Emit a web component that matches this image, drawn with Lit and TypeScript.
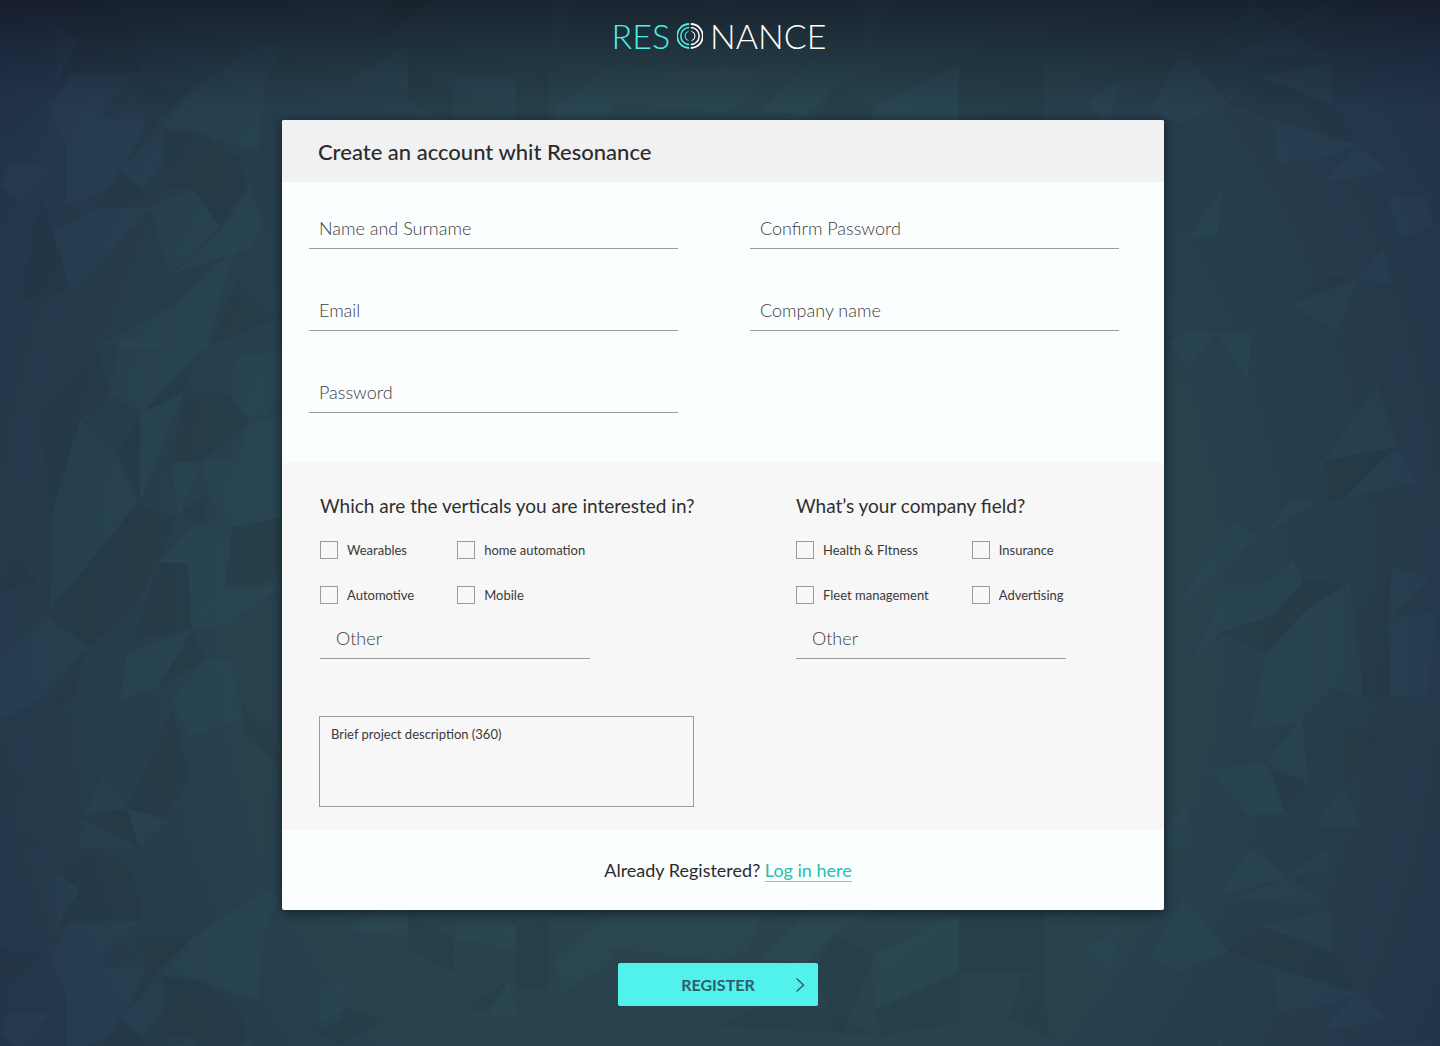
import { LitElement, html, svg, css } from "lit";
import { customElement, property } from "lit/decorators.js";

const LIGHT_FACETS = [
  "57,24 79,42 57,80", "72,73 138,73 115,95 66,147 50,110", "66,147 92,118 146,120 140,140 106,190 66,205",
  "160,127 195,88 262,45 285,40 265,80 258,150 240,147 196,131", "53,232 100,208 149,208 72,292",
  "163,130 165,155 143,190 120,170", "10,163 50,167 20,200 0,187", "347,82 405,47 408,88",
  "150,207 193,190 220,227 170,273", "250,187 263,225 250,248 175,272 222,228", "100,345 180,302 235,250 205,350",
  "80,420 115,453 138,502 50,612 51,517", "140,413 183,393 140,502",
  "250,420 282,418 282,517 232,527 208,493 203,460 238,460", "193,527 232,527 225,587 192,630 188,563 158,563",
  "192,630 158,687 120,700 127,653", "205,660 232,660 240,720 190,735 172,700", "127,808 167,821 140,846",
  "83,819 138,848 80,848", "0,660 47,615 85,648 40,700 0,720", "172,463 203,463 178,515", "225,587 282,587 227,624 192,630",
  "230,393 235,358 282,352 282,400 250,420", "120,340 200,350 141,413 110,393", "85,815 103,776 127,808",
  "1357,145 1388,172 1322,183", "1273,120 1357,145 1330,157 1277,163", "1260,77 1330,63 1332,103",
  "1183,50 1227,103 1180,123 1150,110", "1220,47 1288,30 1250,0", "1288,28 1327,0 1330,22",
  "1233,52 1288,30 1327,57", "1388,197 1428,197 1432,227 1400,238", "1223,187 1217,237 1190,237",
  "1293,305 1357,280 1337,332", "1383,248 1393,285 1360,277", "1217,333 1252,333 1247,378",
  "1182,333 1217,333 1187,365 1167,343", "1377,385 1397,447 1325,460", "1397,447 1415,483 1345,498",
  "1318,500 1260,537 1293,500", "1293,560 1303,580 1273,615 1218,633 1187,670 1227,587 1267,583",
  "1173,613 1233,523 1257,537", "1350,583 1363,700 1333,687 1297,723 1250,730 1267,653 1308,608",
  "1393,567 1430,578 1387,618", "1387,618 1437,613 1427,697 1392,697", "1302,717 1308,783 1267,762",
  "1210,768 1267,763 1285,813 1248,815", "1343,788 1362,828 1315,825", "1187,803 1192,848 1167,848 1167,825",
  "457,78 516,78 516,101 457,91", "557,108 611,65 611,115 560,145", "718,65 763,65 746,101",
  "763,111 807,63 875,63 835,85 807,115", "872,108 959,65 959,125 875,161", "510,131 516,168 485,168",
  "1088,101 1122,78 1108,125", "555,0 575,0 557,60 549,40", "860,0 895,0 862,62", "611,65 718,65 746,101 720,112 611,100",
  "320,140 345,131 342,170 320,185",
];

const DARK_FACETS = [
  "95,0 130,22 143,60 138,73 72,73 57,80 79,42 57,24", "120,172 149,197 127,208 97,208", "40,197 53,230 70,290 20,303",
  "160,130 197,132 240,157 247,187 220,227 193,190 167,187", "196,88 160,120 120,170 146,120 140,90",
  "237,280 277,320 210,345", "97,350 110,393 80,420 51,517 39,413", "138,502 177,518 157,563 133,613 87,647 47,612",
  "183,393 230,393 250,422 203,460 172,463", "232,527 282,517 282,567 260,587 225,587",
  "188,563 192,630 133,640 157,563", "192,630 205,660 158,687", "85,650 73,700 43,715", "13,553 38,583 0,590",
  "172,708 190,776 165,819 127,808", "127,808 138,846 83,819", "13,764 28,786 0,786", "193,370 183,393 141,413",
  "240,700 272,732 282,770 245,735", "27,835 42,848 10,848", "178,515 208,493 205,525", "0,100 48,108 0,143",
  "118,453 140,413 140,502", "1227,103 1260,77 1337,107 1357,145 1273,120", "1293,302 1330,275 1358,278",
  "1325,460 1397,447 1345,498 1328,500", "1358,617 1390,573 1390,697 1363,697", "1343,730 1390,730 1343,788",
  "1303,580 1350,583 1308,608 1267,653 1218,633 1273,615", "1271,770 1308,783 1285,813",
  "409,65 454,91 454,125 409,101", "516,78 549,71 549,141 516,141", "835,85 875,108 841,188 813,125",
  "959,65 1043,65 1043,125 959,125", "718,178 768,155 813,158 880,188", "875,161 959,121 959,175 880,188",
  "490,165 510,131 465,160", "390,0 430,0 372,45", "310,180 345,160 385,172 340,198", "1020,130 1043,125 1050,190 1010,170",
];

@customElement("faceted-backdrop")
export class FacetedBackdrop extends LitElement {
  static styles = css`
    :host { display: block; overflow: hidden; }
    .art { display: block; width: 100%; height: 100%; }
    .light { fill: #3f7484; fill-opacity: 0.07; }
    .dark { fill: #151d22; fill-opacity: 0.09; }
  `;

  render() {
    return html`
      <svg class="art" aria-hidden="true">
        <defs>
          <pattern id="facets" width="1440" height="848" patternUnits="userSpaceOnUse">
            ${DARK_FACETS.map((p) => svg`<polygon class="dark" points=${p} />`)}
            ${LIGHT_FACETS.map((p) => svg`<polygon class="light" points=${p} />`)}
          </pattern>
        </defs>
        <rect width="100%" height="100%" fill="url(#facets)" />
      </svg>
    `;
  }
}

@customElement("brand-logo")
export class BrandLogo extends LitElement {
  static styles = css`
    :host { display: block; }
    .logo { display: flex; align-items: center; gap: 7px; color: #fff; text-decoration: none;
      font: 300 34px/40px Lato, "Liberation Sans", sans-serif; }
    .accent { color: #4ff0ea; }
    .mark { display: block; width: 26px; height: 26px; fill: none; stroke-linecap: butt; }
  `;

  render() {
    return html`
      <a class="logo" href="#" aria-label="Resonance">
        <span class="accent">RES</span>
        <svg class="mark" viewBox="0 0 26 26" aria-hidden="true">
          <g stroke="#4ff0ea">
            <path stroke-width="1.8" d="M12.2 1A12 12 0 0 0 12.2 25" />
            <path stroke-width="1.5" d="M12.2 4.6A8.4 8.4 0 0 0 12.2 21.4" />
            <path stroke-width="1" d="M11.6 8.2A5 5 0 0 0 11.6 17.8" />
          </g>
          <g stroke="#fff">
            <path stroke-width="1.8" d="M13.8 1A12 12 0 0 1 13.8 25" />
            <path stroke-width="1.5" d="M13.8 4.6A8.4 8.4 0 0 1 13.8 21.4" />
            <path stroke-width="1" d="M14.4 8.2A5 5 0 0 1 14.4 17.8" />
          </g>
        </svg>
        <span>NANCE</span>
      </a>
    `;
  }
}

@customElement("line-field")
export class LineField extends LitElement {
  @property() label = "";
  @property() type = "text";
  @property({ type: Boolean, reflect: true }) inset = false;

  static styles = css`
    :host { display: block; }
    .input { box-sizing: border-box; display: block; width: 100%; height: 42px; margin: 0; padding: 0 10px;
      border: 0; border-bottom: 1px solid #999c9d; border-radius: 0; outline: 0; background: none; color: #333;
      font: 300 18px/24px Lato, "Liberation Sans", sans-serif; }
    .input::placeholder { color: #404040; opacity: 1; }
    .input:focus { border-color: #2cbcb0; }
    :host([inset]) .input { padding-left: 16px; }
  `;

  render() {
    return html`<input class="input" type=${this.type} placeholder=${this.label} aria-label=${this.label} />`;
  }
}

@customElement("option-group")
export class OptionGroup extends LitElement {
  @property() heading = "";
  @property({ attribute: false }) options: string[] = [];

  static styles = css`
    :host { display: block; }
    .heading { margin: 0 0 22px; color: #2f2f2f; white-space: nowrap;
      font: 400 19px/26px Lato, "Liberation Sans", sans-serif; }
    .options { display: grid; grid-template-columns: repeat(2, max-content); gap: 27px 43px; }
    .option { display: flex; align-items: center; gap: 9px; color: #3a3a3a;
      font: 400 13px/18px Lato, "Liberation Sans", sans-serif; }
    .box { appearance: none; box-sizing: border-box; flex: none; width: 18px; height: 18px; margin: 0;
      border: 1px solid #9b9b9b; background: none; }
    .box:checked { background: #4ff0ea; }
    .other { display: block; width: 270px; margin-top: 13px; }
  `;

  render() {
    return html`
      <div role="group" aria-labelledby="heading">
        <h2 class="heading" id="heading">${this.heading}</h2>
        <div class="options">
          ${this.options.map((o) => html`<label class="option"><input class="box" type="checkbox" />${o}</label>`)}
        </div>
        <line-field class="other" label="Other" inset></line-field>
      </div>
    `;
  }
}

@customElement("app-root")
export class AppRoot extends LitElement {
  static styles = css`
    :host { display: block; position: relative; isolation: isolate; min-height: 100vh;
      font-family: Lato, "Liberation Sans", sans-serif;
      background: radial-gradient(ellipse 62% 100% at 50% 58%, #29444f 0%, #28434e 50%, #253b4b 76%, #21304a 100%); }
    .backdrop { position: absolute; inset: 0; z-index: -2; }
    .shade { position: absolute; inset: 0 0 auto; height: 110px; z-index: -1;
      background: linear-gradient(rgba(16, 18, 28, 0.6), rgba(16, 18, 28, 0.28) 50%, rgba(16, 18, 28, 0)); }
    .header { display: flex; justify-content: center; padding: 16px 2px 64px 0; }
    .form { display: flex; flex-direction: column; align-items: center; padding-bottom: 40px; }
    .card { box-sizing: border-box; width: 100%; max-width: 888px; padding-left: 6px; }
    .panel { overflow: hidden; border-radius: 2px; background: #fafefe; }
    .shadow { border-radius: 2px; box-shadow: 0 2px 12px rgba(0, 0, 0, 0.55); }
    .title { margin: 0; padding: 17px 36px 15px; background: #f1f1f3; color: #2b2b2b; font-size: 22px;
      font-weight: 500; line-height: 30px; }
    .fields { display: grid; grid-template-columns: 1fr 1fr; gap: 40px 72px; padding: 25px 45px 50px 27px; }
    .column { display: flex; flex-direction: column; gap: 40px; }
    .details { padding: 30px 98px 23px 37px; background: #f7f7f7; }
    .groups { display: flex; flex-wrap: wrap; justify-content: space-between; gap: 40px; padding-left: 1px; }
    .brief { box-sizing: border-box; display: block; width: 100%; max-width: 375px; height: 91px; margin: 57px 0 0;
      padding: 8px 11px; border: 1px solid #9b9b9b; border-radius: 0; outline: 0; resize: none; background: none;
      color: #3a3a3a; font: 400 13px/18px Lato, "Liberation Sans", sans-serif; }
    .brief::placeholder { color: #3a3a3a; opacity: 1; }
    .signin { margin: 0; padding: 28px 0 28px 10px; text-align: center; color: #2b2b2b; font-size: 18px; line-height: 24px; }
    .link { border-bottom: 1px solid #6fd2cb; color: #2cbcb0; text-decoration: none; }
    .register { box-sizing: border-box; display: grid; grid-template-columns: 1fr auto 1fr; align-items: center;
      width: 200px; height: 43px; margin: 53px 4px 0 0; padding: 0 13px; border: 0; border-radius: 2px;
      background: #52f2ec; color: #335c69; cursor: pointer; font: 700 16px/24px Lato, "Liberation Sans", sans-serif; }
    .caption { grid-column: 2; }
    .arrow { justify-self: end; width: 10px; height: 16px; fill: none; stroke: #335c69; stroke-width: 1.4; }
  `;

  render() {
    return html`
      <faceted-backdrop class="backdrop"></faceted-backdrop>
      <div class="shade"></div>
      <header class="header"><brand-logo></brand-logo></header>
      <form class="form" @submit=${(e: Event) => e.preventDefault()}>
        <div class="card">
          <div class="shadow">
            <div class="panel">
              <h1 class="title">Create an account whit Resonance</h1>
              <div class="fields">
                <div class="column">
                  <line-field label="Name and Surname"></line-field>
                  <line-field label="Email" type="email"></line-field>
                  <line-field label="Password" type="password"></line-field>
                </div>
                <div class="column">
                  <line-field label="Confirm Password" type="password"></line-field>
                  <line-field label="Company name"></line-field>
                </div>
              </div>
              <div class="details">
                <div class="groups">
                  <option-group
                    heading="Which are the verticals you are interested in?"
                    .options=${["Wearables", "home automation", "Automotive", "Mobile"]}
                  ></option-group>
                  <option-group
                    heading="What’s your company field?"
                    .options=${["Health & FItness", "Insurance", "Fleet management", "Advertising"]}
                  ></option-group>
                </div>
                <textarea class="brief" maxlength="360" aria-label="Brief project description"
                  placeholder="Brief project description (360)"></textarea>
              </div>
              <p class="signin">Already Registered? <a class="link" href="#login">Log in here</a></p>
            </div>
          </div>
        </div>
        <button class="register" type="submit">
          <span class="caption">REGISTER</span>
          <svg class="arrow" viewBox="0 0 10 16" aria-hidden="true"><path d="M1.5 1.5L8.5 8L1.5 14.5" /></svg>
        </button>
      </form>
    `;
  }
}
